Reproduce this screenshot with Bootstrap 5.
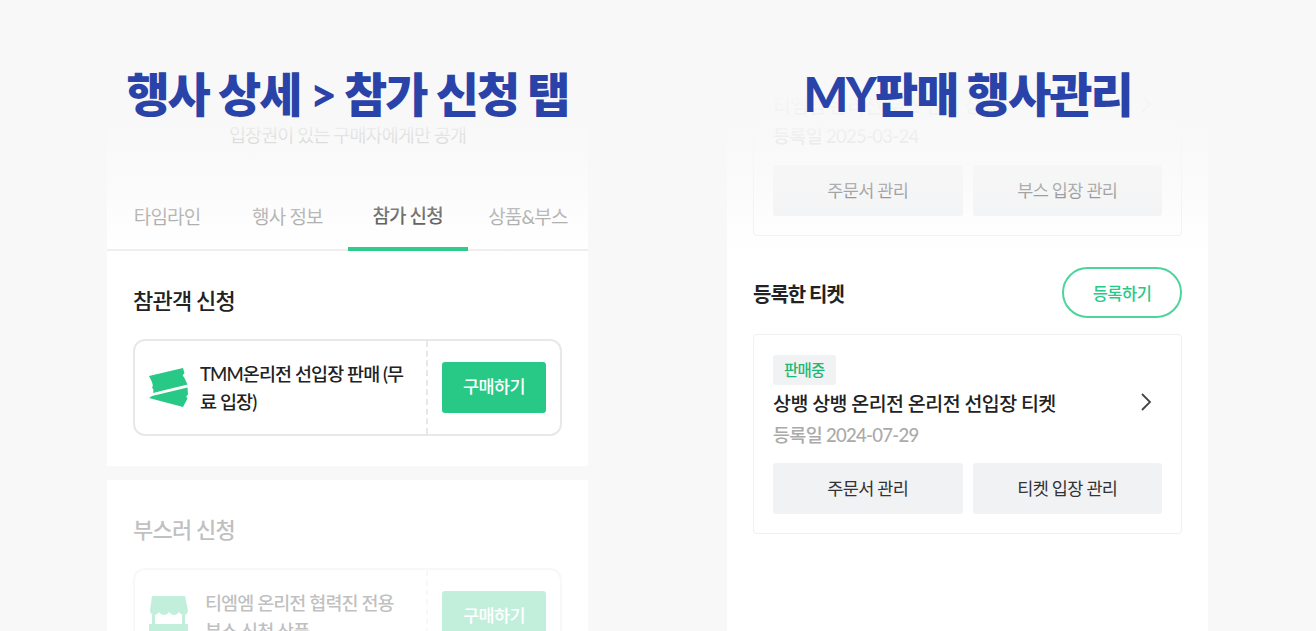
<!DOCTYPE html>
<html lang="ko">
<head>
<meta charset="utf-8">
<title>행사 화면</title>
<link href="https://cdn.jsdelivr.net/npm/bootstrap@5.3.0/dist/css/bootstrap.min.css" rel="stylesheet">
<style>
    html, body { height: 631px; overflow: hidden; }
    body { background: #f8f8f8; color: #222; font-family: Lato, "Noto Sans CJK KR", "Noto Sans", sans-serif; letter-spacing: -.7px; }
    .stage { padding: 0 108px 0 107px; gap: 139px; }
    .screen-col { width: 481px; }
    .head-title { height: 124px; position: relative; z-index: 3; }
    .head-title h1 { margin: 0; padding-top: 63px; font-size: 47px; line-height: 62px; font-weight: 900; color: #2a43a8; letter-spacing: -2px; text-align: center; white-space: nowrap; }
    .screen { position: relative; background: #fff; height: 507px; display: flow-root; }
    .fade-top { position: absolute; left: 0; right: 0; top: -60px; height: 190px; z-index: 2; background: linear-gradient(to bottom, #f8f8f8 0, #f8f8f8 25px, rgba(248,248,248,.96) 60px, rgba(248,248,248,.88) 72px, rgba(248,248,248,.6) 126px, rgba(248,248,248,.3) 152px, rgba(248,248,248,0) 190px); }
    .public-note { height: 59px; margin-top: -1px; margin-bottom: 1px; font-size: 18.5px; line-height: 24px; letter-spacing: -.9px; color: #444; text-align: center; }
    .tab-bar { height: 68px; border-bottom: 2px solid #eee; }
    .tab-item { flex: 1 1 0; position: relative; font-size: 19px; color: #999; text-align: center; padding-top: 21px; line-height: 26px; letter-spacing: -.8px; }
    .tab-item.on { color: #333; padding-top: 20px; font-weight: 500; letter-spacing: -.9px; }
    .tab-item.on::after { content: ""; position: absolute; left: 0; right: 0; bottom: -2px; height: 4px; background: #28c986; }
    .apply-sec { padding: 34px 26px 30px; }
    .apply-sec h2 { font-size: 22px; line-height: 32px; font-weight: 500; margin: 0 0 22px; color: #222; letter-spacing: -.8px; }
    .apply-gap { height: 14px; background: #f8f8f8; }
    .faded { opacity: .28; }
    .apply-card { height: 97px; border: 2px solid #e8e8e8; border-radius: 12px; }
    .apply-info { flex: 1; padding: 0 16px 0 13px; gap: 11px; }
    .apply-info.wide { gap: 16px; padding-right: 14px; }
    .apply-info p { margin: 0; font-size: 18.5px; line-height: 28px; font-weight: 500; color: #222; letter-spacing: -.9px; word-break: break-all; }
    .apply-info svg { flex: none; }
    .apply-act { width: 134px; height: 100%; border-left: 2px dashed #e8e8e8; padding-left: 14px; flex: none; }
    .buy-btn { width: 104px; height: 51px; background: #28c986; border: 0; border-radius: 3px; color: #fff; font-size: 17.5px; font-weight: 500; letter-spacing: -.6px; padding: 0; }
    .buy-btn:hover { background: #28c986; color: #fff; }
    .mgmt-sec { padding: 0 26px; }
    .tk-card { border: 1px solid #f0f0f0; border-radius: 4px; padding: 20px 19px 19px; background: #fff; }
    .tk-card.upper { margin-top: -48px; padding-top: 10px; margin-bottom: 31px; position: relative; }
    .tk-status { display: inline-block; height: 30px; padding: 0 11px; background: #f1f2f4; border-radius: 3px; color: #1fb877; font-size: 15.5px; line-height: 30px; font-weight: 500; }
    .tk-row { padding-right: 10px; margin-top: 2px; }
    .tk-name { height: 30px; font-size: 19.5px; line-height: 34px; font-weight: 500; color: #222; letter-spacing: -.55px; }
    .tk-date { height: 26px; margin-top: 4px; font-size: 18.5px; line-height: 28px; color: #aaa; font-weight: 500; letter-spacing: -.7px; }
    .upper .tk-date { line-height: 26px; }
    .tk-btns { margin-top: 16px; gap: 10px; }
    .tk-btn { flex: 1 1 0; height: 51px; padding: 2px 0 0; background: #f1f2f4; border: 0; border-radius: 3px; font-size: 17.5px; color: #333; letter-spacing: -.7px; }
    .tk-btn:hover { background: #f1f2f4; color: #333; }
    .tk-head { height: 51px; margin-bottom: 16px; }
    .tk-head h2 { margin: 0; padding-top: 2px; font-size: 20px; line-height: 30px; font-weight: 700; color: #222; letter-spacing: -1px; }
    .add-btn { width: 120px; height: 51px; padding: 3px 0 0; background: #fff; border: 2px solid #4dd49c; border-radius: 26px; color: #28c986; font-size: 16.5px; font-weight: 500; letter-spacing: -.5px; }
    .add-btn:hover { background: #fff; color: #28c986; border-color: #4dd49c; }
</style>
</head>
<body>
<div class="stage d-flex">
    <!-- 행사 상세 -->
    <div class="screen-col">
        <div class="head-title"><h1>행사 상세 &gt; 참가 신청 탭</h1></div>
        <div class="screen overflow-hidden">
            <div class="fade-top"></div>
            <div class="public-note">입장권이 있는 구매자에게만 공개</div>
            <div class="tab-bar d-flex">
                <div class="tab-item">타임라인</div>
                <div class="tab-item">행사 정보</div>
                <div class="tab-item on">참가 신청</div>
                <div class="tab-item">상품&amp;부스</div>
            </div>
            <section class="apply-sec">
                <h2>참관객 신청</h2>
                <div class="apply-card d-flex align-items-center">
                    <div class="apply-info d-flex align-items-center">
                        <svg width="41" height="41" viewBox="0 0 41 41"><path fill="#28c986" d="M1 9 35 1l1.500 5.500c-2 .8-2.500 2.500-.5 3.500L39.500 17.500 5 26c.8-2 .6-4-1-5.500 2-1.500 0-6-3-11.500Z"/><path fill="#28c986" d="m4 29 35.500-8.500.5 7c-2 1-2 3-.5 4L35 40 1 31Z"/></svg>
                        <p>TMM온리전 선입장 판매 (무료 입장)</p>
                    </div>
                    <div class="apply-act d-flex align-items-center">
                        <button class="btn buy-btn">구매하기</button>
                    </div>
                </div>
            </section>
            <div class="apply-gap"></div>
            <section class="apply-sec faded">
                <h2>부스러 신청</h2>
                <div class="apply-card d-flex align-items-center">
                    <div class="apply-info wide d-flex align-items-center">
                        <svg width="41" height="41" viewBox="0 0 41 41"><path fill="#28c986" d="M4 0h33l3 14c0 3-2 5-4 5-2.500 0-3.500-1-5-3-1.500 2-3 3-5 3s-3.500-1-5-3c-1.500 2-3 3-5 3s-3.500-1-5-3c-1.500 2-2.500 3-5 3-2 0-4-2-4-5Z"/><path fill="#28c986" d="M4 19h3v14H4Zm30 0h3v14h-3ZM1 28h39v13H1Z"/><path fill="#fff" d="M8 22h26v6H8Z"/></svg>
                        <p>티엠엠 온리전 협력진 전용 부스 신청 상품</p>
                    </div>
                    <div class="apply-act d-flex align-items-center">
                        <button class="btn buy-btn">구매하기</button>
                    </div>
                </div>
            </section>
        </div>
    </div>

    <!-- MY판매 행사관리 -->
    <div class="screen-col">
        <div class="head-title"><h1>MY판매 행사관리</h1></div>
        <div class="screen">
            <div class="fade-top"></div>
            <div class="mgmt-sec">
                <div class="tk-card upper">
                    <div class="tk-row d-flex justify-content-between align-items-center">
                        <div class="tk-name">티엠엠 온리전 부스 신청 상품</div>
                        <svg width="12" height="20" viewBox="0 0 12 20"><path d="m2 2 8 8-8 8" fill="none" stroke="#444" stroke-width="1.800"/></svg>
                    </div>
                    <div class="tk-date">등록일 2025-03-24</div>
                    <div class="tk-btns d-flex">
                        <button class="btn tk-btn">주문서 관리</button>
                        <button class="btn tk-btn">부스 입장 관리</button>
                    </div>
                </div>
                <div class="tk-head d-flex justify-content-between align-items-center">
                    <h2>등록한 티켓</h2>
                    <button class="btn add-btn">등록하기</button>
                </div>
                <div class="tk-card">
                    <span class="tk-status">판매중</span>
                    <div class="tk-row d-flex justify-content-between align-items-center">
                        <div class="tk-name">상뱅 상뱅 온리전 온리전 선입장 티켓</div>
                        <svg width="12" height="20" viewBox="0 0 12 20"><path d="m2 2 8 8-8 8" fill="none" stroke="#444" stroke-width="1.800"/></svg>
                    </div>
                    <div class="tk-date">등록일 2024-07-29</div>
                    <div class="tk-btns d-flex">
                        <button class="btn tk-btn">주문서 관리</button>
                        <button class="btn tk-btn">티켓 입장 관리</button>
                    </div>
                </div>
            </div>
        </div>
    </div>
</div>
<script src="https://cdn.jsdelivr.net/npm/bootstrap@5.3.0/dist/js/bootstrap.bundle.min.js"></script>
</body>
</html>
